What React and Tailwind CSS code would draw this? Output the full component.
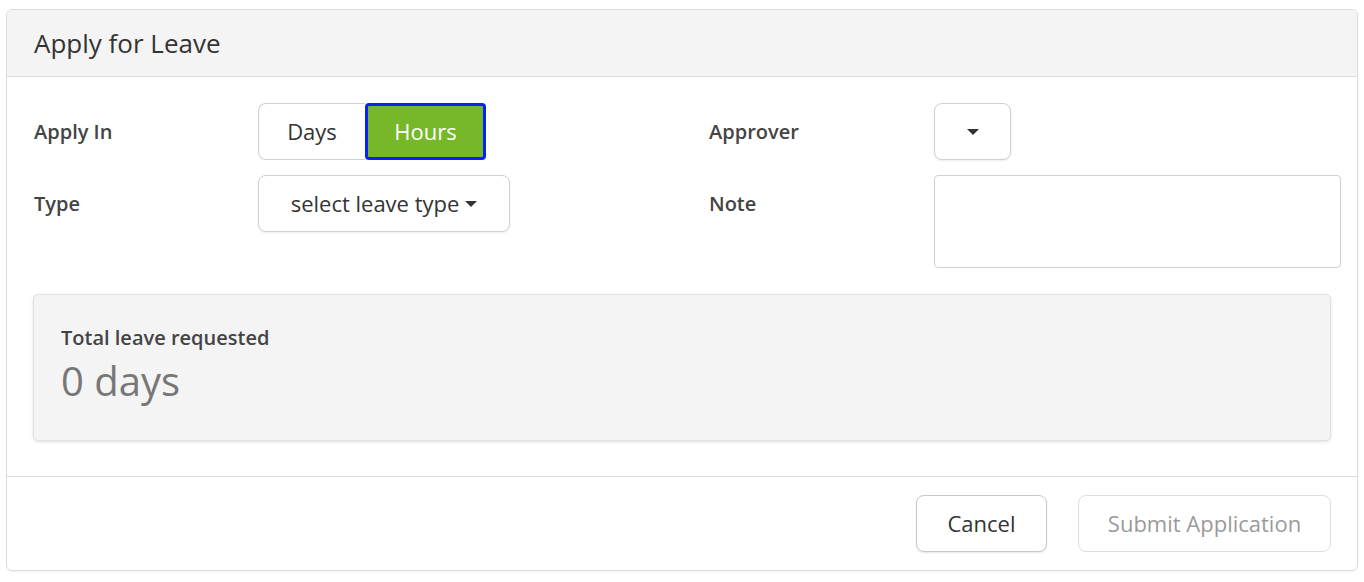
function Caret() {
  return (
    <svg width="12" height="6" viewBox="0 0 12 6" className="inline-block">
      <path d="M0 0 L12 0 L6 6 Z" fill="#333" />
    </svg>
  )
}

export default function App() {
  return (
    <div className="w-[1364px] h-[582px] bg-white pt-[9px] px-[6px] font-['Open_Sans',sans-serif] text-[#333]">
      <div className="border border-[#dcdcdc] rounded-[6px] overflow-hidden shadow-[0_1px_2px_rgba(0,0,0,0.06)]">
        {/* header */}
        <div className="h-[67px] bg-[#f4f4f4] border-b border-[#dcdcdc] flex items-center px-[27px]">
          <h2 className="text-[26px] text-[#333]">Apply for Leave</h2>
        </div>

        {/* form */}
        <div className="pt-[26px] pl-[27px] pr-[16px]">
          <div className="flex">
            <div className="w-[675px] flex flex-col gap-[15px]">
              <div className="flex items-center h-[57px]">
                <div className="w-[224px] text-[20px] font-semibold text-[#444]">Apply In</div>
                <div className="flex h-[57px]">
                  <button className="w-[107px] h-full border border-[#d0d0d0] border-r-0 rounded-l-[8px] text-[22px] text-[#333] bg-white">Days</button>
                  <button className="w-[121px] h-full border-[3px] border-[#0a22f5] rounded-[4px] bg-[#76b82a] text-[22px] text-white">Hours</button>
                </div>
              </div>
              <div className="flex items-center h-[57px]">
                <div className="w-[224px] text-[20px] font-semibold text-[#444]">Type</div>
                <button className="w-[252px] h-[57px] border border-[#d0d0d0] rounded-[8px] bg-white text-[22px] text-[#333] flex items-center justify-center gap-[6px] shadow-[0_1px_2px_rgba(0,0,0,0.08)]">
                  select leave type <Caret />
                </button>
              </div>
            </div>
            <div className="flex-1 flex flex-col gap-[15px]">
              <div className="flex items-center h-[57px]">
                <div className="w-[225px] text-[20px] font-semibold text-[#444]">Approver</div>
                <button className="w-[77px] h-[57px] border border-[#d0d0d0] rounded-[8px] bg-white flex items-center justify-center shadow-[0_1px_2px_rgba(0,0,0,0.08)]">
                  <Caret />
                </button>
              </div>
              <div className="flex items-start">
                <div className="w-[225px] h-[57px] flex items-center text-[20px] font-semibold text-[#444]">Note</div>
                <textarea className="flex-1 h-[93px] border border-[#d0d0d0] rounded-[4px] resize-none"></textarea>
              </div>
            </div>
          </div>
        </div>

        {/* summary */}
        <div className="pt-[26px] pb-[35px] px-[26px]">
          <div className="h-[147px] bg-[#f4f4f4] border border-[#e0e0e0] rounded-[5px] shadow-[0_1px_3px_rgba(0,0,0,0.12)] px-[27px] pt-[28px]">
            <div className="text-[20px] font-semibold text-[#444]">Total leave requested</div>
            <div className="text-[40px] text-[#777] leading-tight mt-[3px]">0 days</div>
          </div>
        </div>

        {/* footer */}
        <div className="border-t border-[#dcdcdc] py-[18px] pr-[26px] flex justify-end gap-[31px]">
          <button className="w-[131px] h-[57px] border border-[#c8c8c8] rounded-[8px] bg-white text-[22px] text-[#333] shadow-[0_1px_2px_rgba(0,0,0,0.1)]">Cancel</button>
          <button className="w-[253px] h-[57px] border border-[#dedede] rounded-[8px] bg-white text-[22px] text-[#9a9a9a]">Submit Application</button>
        </div>
      </div>
    </div>
  )
}
